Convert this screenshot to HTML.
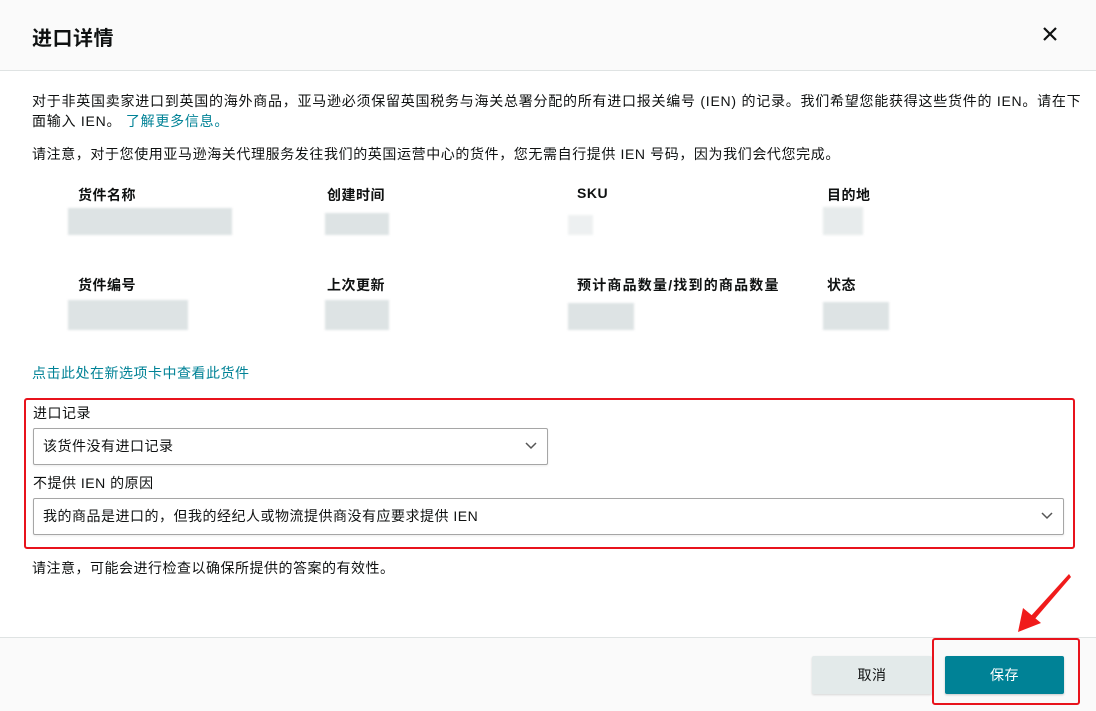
<!DOCTYPE html>
<html><head><meta charset="utf-8"><style>
*{margin:0;padding:0;box-sizing:border-box}
body{width:1096px;height:711px;background:#fff;font-family:"Liberation Sans","Noto Sans CJK SC",sans-serif;color:#0f1111;position:relative;overflow:hidden;font-size:14px;letter-spacing:0.5px}
.a{position:absolute;white-space:nowrap}
.hdr{position:absolute;left:0;top:0;width:1096px;height:71px;background:#fafafa;border-bottom:1px solid #dfe3e3}
.ftr{position:absolute;left:0;top:637px;width:1096px;height:74px;background:#fafafa;border-top:1px solid #dfe3e3}
.lbl{font-weight:bold;font-size:14px;color:#0f1111}
.blur{position:absolute;background:#dde3e4;filter:blur(1px)}
.sel{position:absolute;border:1px solid #a6a6a6;border-radius:2px;background:#fff;height:37px;padding-left:9px;line-height:35px;font-size:14px;box-shadow:0 1px 2px rgba(0,0,0,.08)}
.sel svg{position:absolute;right:10px;top:13px}
.link{color:#008296}
</style></head><body>
<div class="hdr"></div>
<div class="a" style="left:32px;top:22px;font-size:20px;font-weight:bold">进口详情</div>
<svg class="a" style="left:1042px;top:26px" width="16" height="16"><path d="M2 2L14 14M14 2L2 14" stroke="#0f1111" stroke-width="2.2"/></svg>
<div class="a" style="left:32px;top:91px;line-height:20px;font-size:14px;letter-spacing:0.75px">对于非英国卖家进口到英国的海外商品，亚马逊必须保留英国税务与海关总署分配的所有进口报关编号 (IEN) 的记录。我们希望您能获得这些货件的 IEN。请在下<br>面输入 IEN。 <span class="link">了解更多信息。</span></div>
<div class="a" style="left:32px;top:144px;font-size:14px;letter-spacing:0.6px">请注意，对于您使用亚马逊海关代理服务发往我们的英国运营中心的货件，您无需自行提供 IEN 号码，因为我们会代您完成。</div>
<div class="a lbl" style="left:78px;top:185px">货件名称</div>
<div class="a lbl" style="left:327px;top:185px">创建时间</div>
<div class="a lbl" style="left:577px;top:185px">SKU</div>
<div class="a lbl" style="left:827px;top:185px">目的地</div>
<div class="blur" style="left:68px;top:208px;width:164px;height:27px"></div>
<div class="blur" style="left:325px;top:213px;width:64px;height:22px"></div>
<div class="blur" style="left:568px;top:215px;width:25px;height:20px;opacity:.5"></div>
<div class="blur" style="left:823px;top:207px;width:40px;height:28px;opacity:.7"></div>
<div class="a lbl" style="left:78px;top:275px">货件编号</div>
<div class="a lbl" style="left:327px;top:275px">上次更新</div>
<div class="a lbl" style="left:577px;top:275px;letter-spacing:1.2px">预计商品数量/找到的商品数量</div>
<div class="a lbl" style="left:827px;top:275px">状态</div>
<div class="blur" style="left:68px;top:300px;width:120px;height:30px"></div>
<div class="blur" style="left:325px;top:300px;width:64px;height:30px"></div>
<div class="blur" style="left:568px;top:303px;width:66px;height:27px"></div>
<div class="blur" style="left:823px;top:302px;width:66px;height:28px"></div>
<div class="a link" style="left:32px;top:363px;font-size:14px">点击此处在新选项卡中查看此货件</div>
<div class="a" style="left:24px;top:398px;width:1051px;height:151px;border:2px solid #e8131c;border-radius:3px"></div>
<div class="a" style="left:33px;top:403px;font-size:14px">进口记录</div>
<div class="sel" style="left:33px;top:428px;width:515px">该货件没有进口记录<svg width="12" height="8"><path d="M1 1L6 6L11 1" stroke="#555" stroke-width="1.5" fill="none"/></svg></div>
<div class="a" style="left:33px;top:473px;font-size:14px">不提供 IEN 的原因</div>
<div class="sel" style="left:33px;top:498px;width:1031px">我的商品是进口的，但我的经纪人或物流提供商没有应要求提供 IEN<svg width="12" height="8"><path d="M1 1L6 6L11 1" stroke="#555" stroke-width="1.5" fill="none"/></svg></div>
<div class="a" style="left:32px;top:558px;font-size:14px">请注意，可能会进行检查以确保所提供的答案的有效性。</div>
<div class="ftr"></div>
<div class="a" style="left:812px;top:656px;width:120px;height:38px;background:#e3eaea;border-radius:2px;text-align:center;line-height:38px;box-shadow:0 1px 2px rgba(0,0,0,.15)">取消</div>
<div class="a" style="left:945px;top:656px;width:119px;height:38px;background:#008296;color:#fff;border-radius:2px;text-align:center;line-height:38px;box-shadow:0 1px 2px rgba(0,0,0,.2)">保存</div>
<div class="a" style="left:932px;top:638px;width:148px;height:67px;border:2px solid #e8131c;border-radius:3px"></div>
<svg class="a" style="left:1010px;top:570px" width="64" height="66"><polygon points="59,4 61,7 24,50 20,47" fill="#f01b1b"/><polygon points="8,62 13,38 31,53" fill="#f01b1b"/></svg>
</body></html>
